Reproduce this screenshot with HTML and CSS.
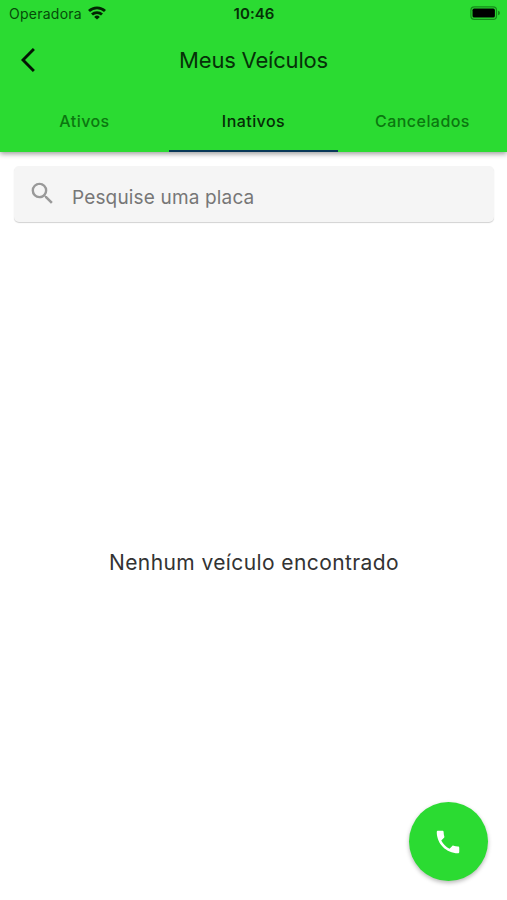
FILE: index.html
```html
<!DOCTYPE html>
<html lang="pt-BR">
<head>
<meta charset="utf-8">
<title>Meus Veículos</title>
<link rel="stylesheet" href="styles.css">
</head>
<body>
<header class="header">
  <div class="status">
    <div class="carrier"><span>Operadora</span>
      <svg class="wifi" viewBox="0 0 18 14" fill="none" stroke="#032403" stroke-width="2.8"><path d="M1 5.1a11.4 11.4 0 0 1 16 0"/><path d="M4 8.6a7.2 7.2 0 0 1 10 0"/><path d="M9 13.5 6.2 10.9a4 4 0 0 1 5.6 0z" fill="#032403" stroke="none"/></svg>
    </div>
    <span class="time">10:46</span>
    <svg class="battery" viewBox="0 0 31 14"><rect x=".9" y=".9" width="25.6" height="12.4" rx="3.4" fill="none" stroke="#168c1a" stroke-width="1.2"/><rect x="2.5" y="2.6" width="22.4" height="9" rx="1.6"/><path d="M28 4.8v4.4q2-.5 2-2.2t-2-2.2z" fill="#168c1a"/></svg>
  </div>
  <div class="bar">
    <svg class="back" viewBox="0 0 14 24" fill="none" stroke="#041604" stroke-width="2.9"><path d="M12.9 1 2 12l10.9 11"/></svg>
    <h1 class="title">Meus Veículos</h1>
  </div>
  <nav class="tabs">
    <a class="tab">Ativos</a>
    <a class="tab active">Inativos</a>
    <a class="tab">Cancelados</a>
  </nav>
</header>
<main class="content">
  <div class="search">
    <svg class="lens" viewBox="0 0 24 24" fill="#999"><path d="M15.5 14h-.79l-.28-.27A6.47 6.47 0 0 0 16 9.5 6.5 6.5 0 1 0 9.5 16c1.61 0 3.09-.59 4.23-1.57l.27.28v.79l5 4.99L20.49 19l-4.99-5zm-6 0C7.01 14 5 11.99 5 9.5S7.01 5 9.5 5 14 7.01 14 9.5 11.99 14 9.5 14z"/></svg>
    <span class="hint">Pesquise uma placa</span>
  </div>
  <p class="empty">Nenhum veículo encontrado</p>
</main>
<button class="fab" aria-label="Ligar"><svg class="phone" viewBox="0 0 24 24" fill="#fff"><path d="M6.62 10.79c1.44 2.83 3.76 5.14 6.59 6.59l2.2-2.2c.27-.27.67-.36 1.02-.24 1.12.37 2.33.57 3.57.57.55 0 1 .45 1 1V20c0 .55-.45 1-1 1C10.61 21 3 13.39 3 4c0-.55.45-1 1-1h3.5c.55 0 1 .45 1 1 0 1.25.2 2.45.57 3.57.11.35.03.74-.25 1.02l-2.2 2.2z"/></svg></button>
</body>
</html>
```
FILE: styles.css
```css
* { box-sizing: border-box; }
body {
  margin: 0;
  height: 900px;
  display: flex;
  flex-direction: column;
  overflow: hidden;
  background: #fff;
  font-family: Inter, "Liberation Sans", sans-serif;
}
.header {
  height: 152px;
  flex: none;
  background: #2bdb32;
  box-shadow: 0 2px 5px rgba(0, 0, 0, .38);
}
.status {
  height: 28px;
  padding: 0 6px 0 9px;
  display: grid;
  grid-template-columns: 1fr auto 1fr;
  align-items: center;
  font-size: 14px;
  line-height: 28px;
  color: #064b09;
}
.carrier { display: flex; align-items: center; gap: 6px; letter-spacing: .25px; }
.wifi { width: 18px; height: 14px; margin-top: -3px; }
.time { font-weight: 600; font-size: 15px; color: #053007; letter-spacing: .1px; margin-left: -2px; }
.battery { width: 31px; height: 14px; justify-self: end; margin-top: -2px; }
.bar {
  height: 64px;
  display: grid;
  grid-template-columns: 60px 1fr 60px;
  align-items: center;
}
.back { width: 14px; height: 24px; margin-left: 21px; margin-top: -1px; }
.title {
  margin: 0;
  text-align: center;
  font-size: 22px;
  font-weight: 400;
  line-height: 30px;
  letter-spacing: -.2px;
  color: #063108;
}
.tabs { height: 60px; display: grid; grid-template-columns: repeat(3, 1fr); }
.tab {
  display: flex;
  justify-content: center;
  height: 60px;
  border-bottom: 2px solid transparent;
  font-size: 16px;
  font-weight: 550;
  line-height: 59px;
  letter-spacing: .45px;
  color: #0b7710;
}
.active { border-color: #083858; color: #052c06; }
.content { flex: 1; padding: 14px 13px 0 14px; }
.search {
  height: 56px;
  display: flex;
  align-items: center;
  padding-left: 14px;
  border-radius: 5px;
  background: #f5f5f5;
  box-shadow: 0 1px 1px rgba(0, 0, 0, .18);
}
.lens { width: 29px; height: 29px; margin-top: -1px; }
.hint { margin: 7px 0 0 15px; font-size: 19px; line-height: 26px; letter-spacing: .16px; color: #777; }
.empty {
  margin: 326px 0 0;
  text-align: center;
  font-size: 21px;
  line-height: 30px;
  letter-spacing: .4px;
  color: #333;
}
.fab {
  position: absolute;
  left: 409px;
  top: 802px;
  width: 79px;
  height: 79px;
  display: grid;
  place-items: center;
  padding: 0;
  border: 0;
  border-radius: 50%;
  background: #2bdb32;
  box-shadow: 0 2px 4px rgba(0, 0, 0, .28);
}
.phone { width: 30px; height: 30px; margin-left: -1px; }
```
